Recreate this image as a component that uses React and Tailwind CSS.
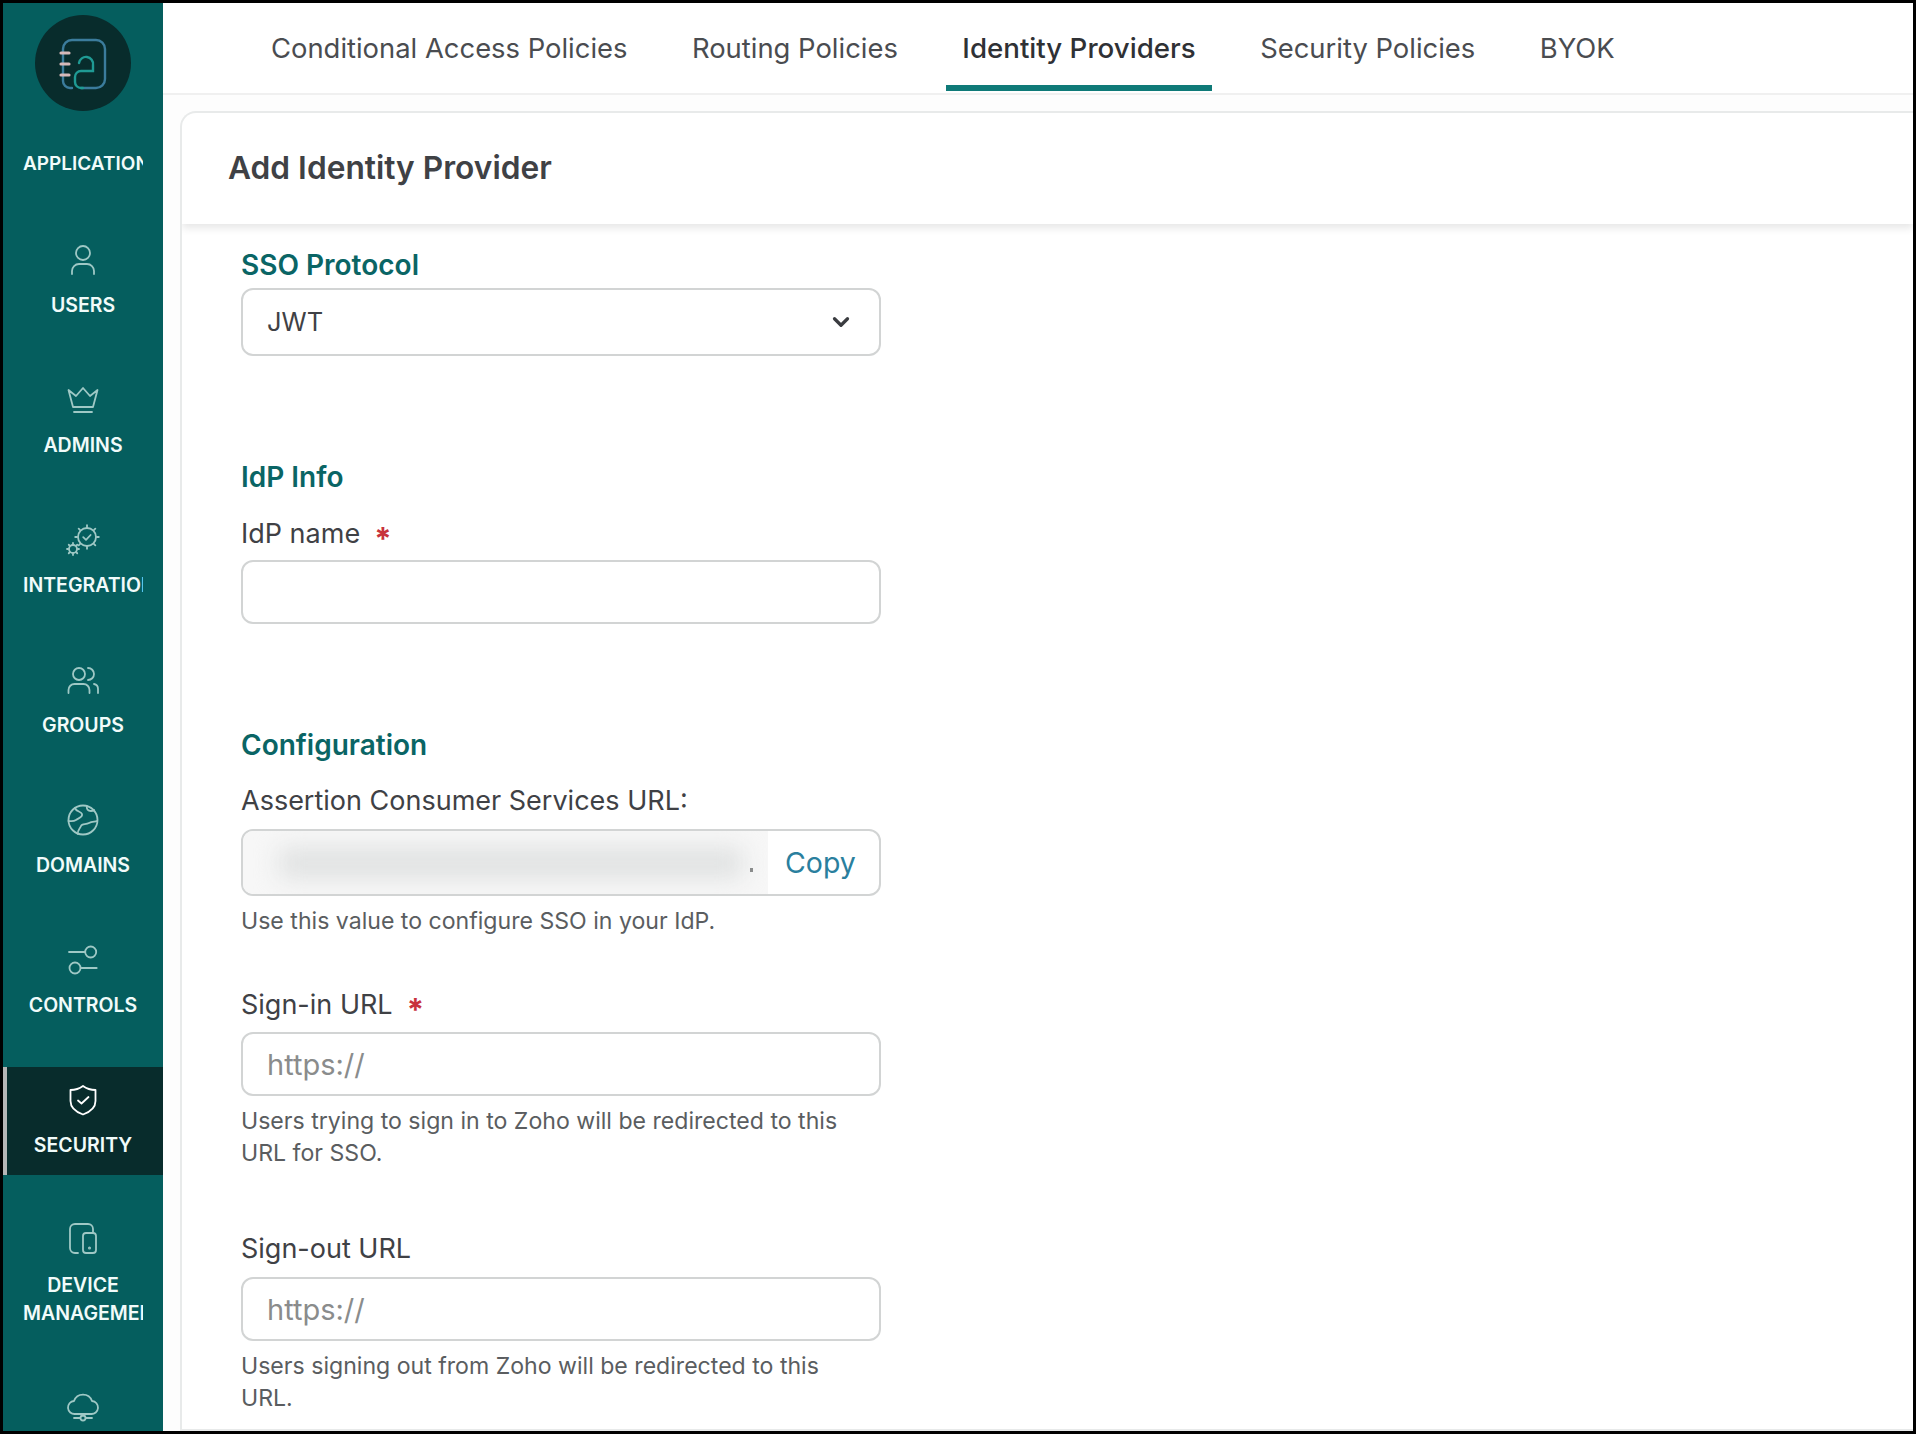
import React from 'react';
import { ChevronDown } from 'lucide-react';

const tabs = ['Conditional Access Policies', 'Routing Policies', 'Identity Providers', 'Security Policies', 'BYOK'];

const LogoIcon = () => (
  <svg width="56" height="56" viewBox="0 0 56 56" fill="none" strokeWidth="2.4" strokeLinecap="round">
    <path d="M26 53H41a9 9 0 0 0 9-9V14a9 9 0 0 0-9-9H17a9 9 0 0 0-9 9V46a7 7 0 0 0 7 7h2" stroke="#3b7c9c" />
    <path d="M24 28a7 7 0 0 1 14 2V36H26a6 6 0 0 0-6 6V47a6 6 0 0 0 6 6h2" stroke="#1f9a94" />
    <path d="M6 18h8M6 29h8M6 40h8" stroke="#d8b9b9" strokeWidth="3.2" />
  </svg>
);

const UsersIcon = () => (
  <>
    <circle cx="17" cy="10" r="7" />
    <path d="M6 31V28a7 7 0 0 1 7-7h8a7 7 0 0 1 7 7v3" />
  </>
);

const AdminsIcon = () => (
  <>
    <path d="M2.5 7L10 13L17 5L24 13L31.5 7L27 24H7Z" />
    <path d="M8 29H26" />
  </>
);

const gearTeeth = (cx, cy, inner, outer, count) =>
  Array.from({ length: count }, (_, i) => {
    const a = (i * 2 * Math.PI) / count;
    return (
      <line
        key={i}
        x1={cx + inner * Math.cos(a)}
        y1={cy + inner * Math.sin(a)}
        x2={cx + outer * Math.cos(a)}
        y2={cy + outer * Math.sin(a)}
      />
    );
  });

const IntegrationsIcon = () => (
  <>
    <circle cx="21" cy="14" r="9" />
    {gearTeeth(21, 14, 10, 11.8, 8)}
    <path d="M17.2 14.2l2.8 2.6l4.6-4.8" />
    <circle cx="7" cy="26" r="4" strokeWidth="1.8" />
    {gearTeeth(7, 26, 4.8, 6, 8)}
  </>
);

const GroupsIcon = () => (
  <>
    <circle cx="13" cy="11" r="6" />
    <path d="M22 5a6 6 0 0 1 0 12" />
    <path d="M2.5 30V27a6 6 0 0 1 6-6h9a6 6 0 0 1 6 6v3" />
    <path d="M28 21a5 5 0 0 1 4 5v4" />
  </>
);

const DomainsIcon = () => (
  <>
    <circle cx="17" cy="17" r="14.5" />
    <path d="M9 5c1 4 6 3 7 6s-3 4-6 6-6 1-7.5 1" />
    <path d="M12 31c-1-4 2-5 3-8s5-1 8-3 6-1 8-2" />
    <path d="M21 3c-1 3 1 5 4 5s3-1 3-1" />
  </>
);

const ControlsIcon = () => (
  <>
    <path d="M3 9H19" />
    <circle cx="24.7" cy="9" r="5.5" />
    <circle cx="9" cy="25" r="5.5" />
    <path d="M14.7 25H30.7" />
  </>
);

const SecurityIcon = () => (
  <>
    <path d="M17 3C21 6 25 7 29.5 7V18C29.5 25 24 29 17 31.5C10 29 4.5 25 4.5 18V7C9 7 13 6 17 3Z" />
    <path d="M12 17.5l3.5 3l7-6.5" />
  </>
);

const DeviceIcon = () => (
  <>
    <path d="M12 30H9a5 5 0 0 1-5-5V6a5 5 0 0 1 5-5h13a5 5 0 0 1 5 5v3" />
    <rect x="17" y="10" width="13" height="20" rx="3" />
    <circle cx="23.5" cy="25" r="0.6" />
  </>
);

const CloudIcon = () => (
  <>
    <path d="M9 23a6.5 6.5 0 0 1-1-13a9.5 9.5 0 0 1 18 0a6.5 6.5 0 0 1-1 13Z" />
    <path d="M17 23v1.5M8 27h6M20 27h6" />
    <circle cx="17" cy="27" r="2.5" />
  </>
);

const navItems = [
  { id: 'users', lines: ['USERS'], icon: <UsersIcon /> },
  { id: 'admins', lines: ['ADMINS'], icon: <AdminsIcon /> },
  { id: 'integrations', lines: ['INTEGRATIONS'], icon: <IntegrationsIcon /> },
  { id: 'groups', lines: ['GROUPS'], icon: <GroupsIcon /> },
  { id: 'domains', lines: ['DOMAINS'], icon: <DomainsIcon /> },
  { id: 'controls', lines: ['CONTROLS'], icon: <ControlsIcon /> },
  { id: 'security', lines: ['SECURITY'], icon: <SecurityIcon />, active: true },
  { id: 'device', lines: ['DEVICE', 'MANAGEMENT'], icon: <DeviceIcon /> },
  { id: 'cloud', lines: [], icon: <CloudIcon /> },
];

const NavItem = ({ lines, icon, active }) => (
  <div
    className={`shrink-0 min-h-[108px] pt-4 pb-[16px] flex flex-col items-center ${
      active ? 'bg-[#082c2c] border-l-4 border-[#b5b5b5] pr-1' : ''
    }`}
  >
    <svg
      className="shrink-0"
      width="34"
      height="34"
      viewBox="0 0 34 34"
      fill="none"
      stroke={active ? '#ffffff' : '#9fc8c5'}
      strokeWidth="1.8"
      strokeLinecap="round"
      strokeLinejoin="round"
    >
      {icon}
    </svg>
    {lines.length > 0 && (
      <div className="shrink-0 w-[120px] mt-[13.5px] overflow-hidden text-center text-[19.5px] leading-[28px] font-semibold text-[#f1fbfa]">
        {lines.map((word) => (
          <div key={word} className="whitespace-nowrap">
            {word}
          </div>
        ))}
      </div>
    )}
  </div>
);

const Sidebar = () => (
  <aside className="w-[160px] shrink-0 h-full bg-[#055e5e] overflow-hidden flex flex-col gap-8">
    <div className="shrink-0 h-[192px] pt-3 flex flex-col items-center">
      <div className="size-24 rounded-full bg-[#082c2c] flex items-center justify-center">
        <LogoIcon />
      </div>
      <div className="w-[120px] mt-[39px] overflow-hidden text-center text-[19px] leading-[28px] font-semibold text-[#f1fbfa] whitespace-nowrap">
        APPLICATIONS
      </div>
    </div>
    {navItems.map(({ id, ...item }) => (
      <NavItem key={id} {...item} />
    ))}
  </aside>
);

const Required = () => (
  <span className="inline-block align-top h-8 ml-[14px] translate-y-[5px] text-[31px] leading-8 text-[#c8323c] font-bold">
    *
  </span>
);

const FieldLabel = ({ children, className = '' }) => (
  <div className={`h-8 text-[27px] leading-8 text-[#3f4145] ${className}`}>{children}</div>
);

const SectionTitle = ({ children, className = '' }) => (
  <div className={`text-[28px] leading-8 font-semibold text-[#0a6565] ${className}`}>{children}</div>
);

const Helper = ({ children }) => (
  <p className="mt-[9px] w-[610px] text-[23.1px] leading-8 text-[#5a5d60]">{children}</p>
);

const TextBox = ({ placeholder, className = '' }) => (
  <div
    className={`w-[640px] h-16 flex items-center pt-[2px] px-6 border-2 border-[#d2d4d4] rounded-xl text-[29px] text-[#8a8c8c] ${className}`}
  >
    {placeholder}
  </div>
);

export default function App() {
  return (
    <div
      className="w-[1916px] h-[1434px] bg-black p-[3px] overflow-hidden flex text-[#3f4145]"
      style={{ fontFamily: 'Inter, "Noto Sans", sans-serif' }}
    >
      <Sidebar />
      <main className="flex-1 min-w-0 h-full bg-[#fdfdfd] flex flex-col">
        <nav className="h-[92px] shrink-0 bg-white border-b-2 border-[#f0f0f0] pl-[92px] flex gap-[32.5px]">
          {tabs.map((tab) => (
            <div
              key={tab}
              className={`h-[88px] px-4 flex items-center ${
                tab === 'Identity Providers'
                  ? 'text-[27.7px] font-medium text-[#2f3135] border-b-[6px] border-[#0f7a78] pt-[10px]'
                  : 'text-[27.4px] text-[#4a4c50] pt-1'
              }`}
            >
              {tab}
            </div>
          ))}
        </nav>
        <section className="flex-1 min-h-0 ml-[17px] mt-4 bg-white border-2 border-r-0 border-[#e8eaea] rounded-tl-2xl flex flex-col overflow-hidden">
          <header className="h-[111px] shrink-0 pl-[46px] pb-[2px] flex items-center text-[31.7px] font-semibold text-[#3f4145] shadow-[0_4px_8px_rgba(0,0,0,0.1)]">
            Add Identity Provider
          </header>
          <div className="pl-[59px] pt-[25px]">
            <SectionTitle>SSO Protocol</SectionTitle>
            <div className="mt-[7px] w-[640px] h-[68px] flex items-center justify-between pl-6 pr-[25px] border-2 border-[#d2d4d4] rounded-xl text-[25.5px] text-[#3f4145]">
              JWT
              <ChevronDown size={26} strokeWidth={3} className="text-[#3a3c40]" />
            </div>

            <SectionTitle className="mt-[105px]">IdP Info</SectionTitle>
            <FieldLabel className="mt-[25px]">
              IdP name
              <Required />
            </FieldLabel>
            <TextBox className="mt-[10px]" />

            <SectionTitle className="mt-[105px]">Configuration</SectionTitle>
            <FieldLabel className="mt-6">Assertion Consumer Services URL:</FieldLabel>
            <div className="mt-3 w-[640px] h-[67px] flex border-2 border-[#d2d4d4] rounded-xl overflow-hidden">
              <div className="relative w-[525px] bg-[#f7f7f7] overflow-hidden">
                <div className="absolute left-[36px] top-[17px] w-[464px] h-[30px] bg-[#dfe1e1] blur-md" />
                <span className="absolute left-[507px] top-[37px] w-[3px] h-1 bg-[#8a8c8c]" />
              </div>
              <div className="flex-1 flex items-center pt-[2px] pl-[17px] text-[28.5px] text-[#2a7f9e]">Copy</div>
            </div>
            <Helper>Use this value to configure SSO in your IdP.</Helper>

            <FieldLabel className="mt-[52px]">
              Sign-in URL
              <Required />
            </FieldLabel>
            <TextBox className="mt-[11px]" placeholder="https://" />
            <Helper>Users trying to sign in to Zoho will be redirected to this URL for SSO.</Helper>

            <FieldLabel className="mt-16">Sign-out URL</FieldLabel>
            <TextBox className="mt-3" placeholder="https://" />
            <Helper>Users signing out from Zoho will be redirected to this URL.</Helper>
          </div>
        </section>
      </main>
    </div>
  );
}
